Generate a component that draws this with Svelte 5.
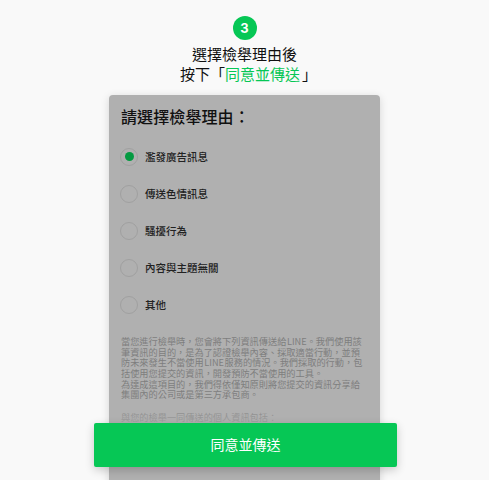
<script lang="ts">
	const reasons = ['濫發廣告訊息', '傳送色情訊息', '騷擾行為', '內容與主題無關', '其他'];
	let selected = $state(0);
</script>

<main class="page">
	<div class="step">3</div>
	<h2 class="title">
		選擇檢舉理由後<br />
		<span class="second">按下「<em>同意並傳送</em>」</span>
	</h2>

	<section class="card">
		<h3 class="card-title">請選擇檢舉理由：</h3>
		<ul class="reasons">
			{#each reasons as reason, i}
				<li class="reason">
					<button class="radio" class:on={selected === i} onclick={() => (selected = i)} aria-label={reason}></button>
					<span>{reason}</span>
				</li>
			{/each}
		</ul>
		<p class="notice">
			當您進行檢舉時，您會將下列資訊傳送給 LINE。我們使用該筆資訊的目的，是為了認證檢舉內容、採取適當行動，並預防未來發生不當使用 LINE 服務的情況。我們採取的行動，包括使用您提交的資訊，開發預防不當使用的工具。<br />
			為達成這項目的，我們得依僅知原則將您提交的資訊分享給集團內的公司或是第三方承包商。
		</p>
		<p class="notice next">與您的檢舉一同傳送的個人資訊包括：</p>
	</section>

	<div class="fade"></div>
	<button class="submit">同意並傳送</button>
</main>

<style>
	:global(body) {
		margin: 0;
		background: #f9f9f9;
	}

	.page {
		position: relative;
		height: 480px;
		overflow: hidden;
		padding-top: 16px;
		box-sizing: border-box;
		display: flex;
		flex-direction: column;
		align-items: center;
		font-family: 'Noto Sans CJK TC', 'Inter', sans-serif;
		color: #111;
	}

	.step {
		width: 24px;
		height: 24px;
		border-radius: 50%;
		background: #06c755;
		color: #fff;
		font: 700 13px/24px 'Inter', sans-serif;
		text-align: center;
	}

	.title {
		margin: 4px 0 0;
		font-size: 15px;
		font-weight: 400;
		line-height: 20px;
		text-align: center;
	}

	.second {
		padding-left: 8px;
	}

	.title em {
		font-style: normal;
		color: #06c755;
		margin-right: 2px;
	}

	.card {
		margin-top: 11px;
		width: 271px;
		flex: none;
		height: 420px;
		box-sizing: border-box;
		padding: 10px 15px 10px 12px;
		background: #b0b0b0;
		border-radius: 4px;
		box-shadow: 0 2px 8px rgba(0, 0, 0, 0.15);
	}

	.card-title {
		margin: 0;
		font-size: 16px;
		font-weight: 500;
		line-height: 22px;
		letter-spacing: 0.1px;
		white-space: nowrap;
	}

	.reasons {
		list-style: none;
		margin: 11px 0 0 -1px;
		padding: 0;
	}

	.reason {
		display: flex;
		align-items: center;
		gap: 7px;
		height: 37px;
		font-size: 10.5px;
		font-weight: 500;
		color: #222;
	}

	.radio {
		width: 18px;
		height: 18px;
		padding: 0;
		border: 1px solid #a0a0a0;
		border-radius: 50%;
		background: transparent;
		display: flex;
		align-items: center;
		justify-content: center;
	}

	.radio.on::after {
		content: '';
		width: 9px;
		height: 9px;
		border-radius: 50%;
		background: #049a41;
	}

	.notice {
		margin: 13px 0 0;
		font-size: 9.2px;
		line-height: 10.67px;
		word-spacing: -1.5px;
		color: #7e7e7e;
	}

	.notice.next {
		margin-top: 12px;
	}

	.fade {
		position: absolute;
		left: 109px;
		width: 271px;
		top: 403px;
		height: 20px;
		background: linear-gradient(rgba(176, 176, 176, 0), rgba(176, 176, 176, 0.7));
	}

	.submit {
		position: absolute;
		left: 94px;
		top: 423px;
		width: 303px;
		height: 44px;
		padding: 0 0 2px;
		border: 0;
		border-radius: 2px;
		background: #06c755;
		color: #fff;
		font-family: inherit;
		font-size: 14px;
		box-shadow: 0 3px 10px rgba(0, 0, 0, 0.2);
	}
</style>
